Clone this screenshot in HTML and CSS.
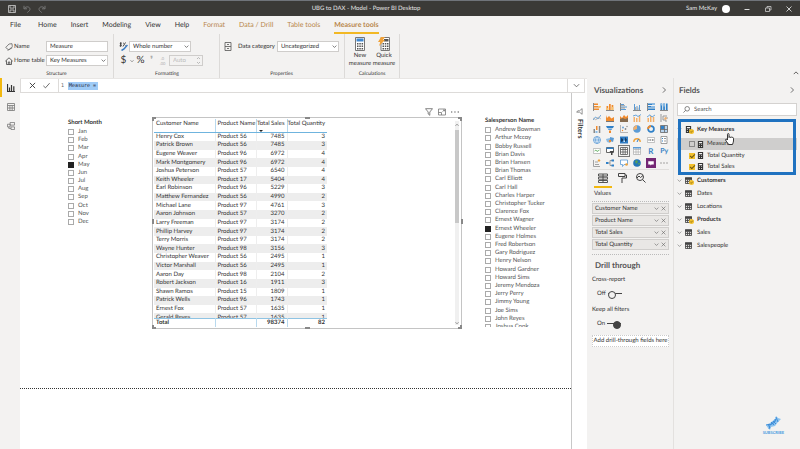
FILE: index.html
```html
<!DOCTYPE html>
<html lang="en">
<head>
<meta charset="utf-8">
<title>UBG to DAX - Model - Power BI Desktop</title>
<link rel="stylesheet" href="styles.css">
</head>
<body>
<svg class="defs" aria-hidden="true">
  <symbol id="chev" viewBox="0 0 8 8"><path d="M1 2.5 4 5.5 7 2.5" fill="none" stroke="currentColor"/></symbol>
  <symbol id="chev-r" viewBox="0 0 8 8"><path d="M2.5 .5 6 4 2.5 7.5" fill="none" stroke="currentColor"/></symbol>
  <symbol id="x" viewBox="0 0 8 8"><path d="M1 1 7 7M7 1 1 7" fill="none" stroke="currentColor"/></symbol>
  <symbol id="tbl" viewBox="0 0 8 8"><path d="M.5 1h7v6.5h-7zM.5 3h7M.5 5.2h7M2.9 3v4.5M5.2 3v4.5" fill="none" stroke="#444"/><path d="M0 .5h8v2H0z" fill="#444"/></symbol>
  <symbol id="calc" viewBox="0 0 8 8"><path d="M1 0h6v8H1z" fill="#333"/><path d="M2.2 1.2h3.6v1.3H2.2zM2.2 3.7h1v1h-1zM4.8 3.7h1v1h-1zM2.2 5.8h1v1h-1zM4.8 5.8h1v1h-1z" fill="#f3f2f1"/></symbol>
  <symbol id="badge" viewBox="0 0 6 6"><circle cx="3" cy="3" r="3" fill="#f2c02c"/><path d="M1.5 3 2.6 4.1 4.5 2" fill="none" stroke="#6b5510" stroke-width=".8"/></symbol>
</svg>
<div class="app">
  <header class="titlebar">
    <div class="quick">
      <button aria-label="Save"><svg viewBox="0 0 8 8"><path d="M.5.5h7v7h-7zM2 .5v2.6h4V.5M2 7.5V5h4v2.5" fill="none" stroke="#ccc" stroke-width=".8"/></svg></button>
      <button aria-label="Undo"><svg viewBox="0 0 8 8"><path d="M1 .8v3h3M1.2 3.6C3 .8 7 1.600 7 4.300 7 5.600 5.500 6.500 4.300 7.500" fill="none" stroke="#777"/></svg></button>
      <button aria-label="Redo"><svg viewBox="0 0 8 8"><path d="M7 .8v3H4M6.800 3.600C5 .8 1 1.600 1 4.300 1 5.600 2.500 6.500 3.700 7.500" fill="none" stroke="#777"/></svg></button>
    </div>
    <h1>UBG to DAX - Model - Power BI Desktop</h1>
    <div class="account"><span>Sam McKay</span><i class="avatar"></i>
      <button aria-label="Minimize"><svg viewBox="0 0 8 8"><path d="M1.500 4.500h5" stroke="#ddd"/></svg></button>
      <button aria-label="Restore"><svg viewBox="0 0 8 8"><path d="M1.500 3h4v3.500h-4zM3 3V1.500h4V5H5.500" fill="none" stroke="#ccc" stroke-width=".8"/></svg></button>
      <button aria-label="Close"><svg viewBox="0 0 8 8"><path d="M1.500 1.500l5 5M6.500 1.500l-5 5" stroke="#ddd" stroke-width=".9"/></svg></button>
    </div>
  </header>

  <nav class="tabs">
    <a href="#">File</a><a href="#">Home</a><a href="#">Insert</a><a href="#">Modeling</a><a href="#">View</a><a href="#">Help</a><a href="#" class="ctx">Format</a><a href="#" class="ctx">Data / Drill</a><a href="#" class="ctx">Table tools</a><a href="#" class="ctx on">Measure tools</a>
  </nav>

  <section class="ribbon">
    <div class="group structure">
      <div class="line"><svg class="ic" viewBox="0 0 8 8"><path d="M.7 4.500 4 1l3-.3L7.300 3.500 3.800 7zM2.500 7.300 7.300 4.800" fill="none" stroke="#666" stroke-width=".8"/></svg><label for="name">Name</label><input id="name" value="Measure"></div>
      <div class="line"><svg class="ic" viewBox="0 0 8 8"><path d="M.3 4.200 4 .8l3.700 3.400M1.500 3.500v4h5v-4M3.300 7.500V5h1.500v2.500" fill="none" stroke="#444" stroke-width=".8"/></svg><label for="home">Home table</label><span class="sel"><select id="home"><option>Key Measures</option></select><svg><use href="#chev"/></svg></span></div>
      <p>Structure</p>
    </div>
    <div class="group formatting">
      <div class="line"><svg class="ic" viewBox="0 0 9 9"><path d="M2.800 1.200C1.300.6.500 1.800 1.700 2.400 3 3 2.500 4.200.6 3.800M1.700.3v4.500M4 4.500 6.500.5M4.200 1.200h.8M6.300 3.800h.9" fill="none" stroke="#333" stroke-width=".9"/><path d="M8.500 3 5 7 2.500 8.500" fill="none" stroke="#3b7dc4" stroke-width="1.500"/></svg><span class="sel"><select aria-label="Format"><option>Whole number</option></select><svg><use href="#chev"/></svg></span></div>
      <div class="line marks"><button>$</button><svg class="dn"><use href="#chev"/></svg><button>%</button><button class="off">❜</button><button class="off dec"><span>.0</span><span>.00</span></button><span class="sel auto"><input aria-label="Decimal places" placeholder="Auto"><svg viewBox="0 0 5 9"><path d="M1 3 2.500 1.500 4 3M1 6l1.500 1.500L4 6" fill="none" stroke="#aaa" stroke-width=".8"/></svg></span></div>
      <p>Formatting</p>
    </div>
    <div class="group properties">
      <div class="line"><svg class="ic" viewBox="0 0 8 9"><path d="M1 .5h6v8H1zM1 4.500h6M3 2.500h2M3 6.500h2" fill="none" stroke="#555" stroke-width=".8"/></svg><label for="cat">Data category</label><span class="sel"><select id="cat"><option>Uncategorized</option></select><svg><use href="#chev"/></svg></span></div>
      <p>Properties</p>
    </div>
    <div class="group calcs">
      <div class="bigs">
        <button><svg viewBox="0 0 12 14"><path d="M1.500.5h9v13h-9z" fill="#fff" stroke="#777"/><path d="M2.500 1.500h7v3h-7z" fill="#3f87cf"/><path d="M3 6h1.500v1.500H3zM5.300 6h1.500v1.500H5.300zM7.600 6h1.500v1.500H7.600zM3 8.500h1.500V10H3zM5.300 8.500h1.500V10H5.300zM7.600 8.500h1.500V10H7.600zM3 11h1.500v1.500H3zM5.300 11h1.500v1.500H5.300zM7.600 11h1.500v1.500H7.600z" fill="#555"/></svg>New<br>measure</button>
        <button><svg viewBox="0 0 12 14"><path d="M3 .5h8.500v13H3z" fill="#fff" stroke="#777"/><path d="M6 2h4.500v2.500H6zM4.500 6H6v1.500H4.500zM6.800 6h1.500v1.500H6.800zM9 6h1.500v1.500H9zM4.500 8.500H6V10H4.500zM6.800 8.500h1.500V10H6.800zM9 8.500h1.500V10H9zM4.500 11H6v1.500H4.500zM6.800 11h1.500v1.500H6.800zM9 11h1.500v1.500H9z" fill="#555"/><path d="M3 0h4L5 3h2L1 9l1.300-4H0z" fill="#f0a23a"/></svg>Quick<br>measure</button>
      </div>
      <p>Calculations</p>
    </div>
    <button class="collapse" aria-label="Collapse ribbon"><svg><use href="#chev"/></svg></button>
  </section>

  <main class="work">
    <nav class="rail">
      <a href="#" class="on" aria-label="Report"><svg viewBox="0 0 8 8"><path d="M.5 0v7.500H8M2.500 7V3.500M4.500 7V1M6.800 7V2.200" fill="none" stroke="#333" stroke-width="1.200"/></svg></a>
      <a href="#" aria-label="Data"><svg viewBox="0 0 8 8"><path d="M.5.5h7v7h-7zM.5 2.500h7M.5 5h7M2.900 2.500v5M5.200 2.500v5" fill="none" stroke="#777" stroke-width=".8"/></svg></a>
      <a href="#" aria-label="Model"><svg viewBox="0 0 9 9"><path d="M3.500.5h5v3h-5zM.5 2.500h3v3h-3zM4.500 5.500h4v3h-4zM2 5.500v1.700h2.500" fill="none" stroke="#777" stroke-width=".9"/></svg></a>
    </nav>

    <section class="report">
      <div class="formula">
        <div class="fx"><button aria-label="Cancel"><svg><use href="#x"/></svg></button><button aria-label="Commit"><svg viewBox="0 0 9 8"><path d="M.5 4.500 3.200 7 8.500 1" fill="none" stroke="#444"/></svg></button></div>
        <div class="code"><span>1</span><mark>Measure =</mark></div>
        <button class="expand" aria-label="Expand"><svg><use href="#chev"/></svg></button>
      </div>
      <div class="stage">
        <div class="canvas">
          <fieldset class="slicer months">
            <legend>Short Month</legend>
            <div class="items">
              <label><input type="checkbox">Jan</label><label><input type="checkbox">Feb</label><label><input type="checkbox">Mar</label><label><input type="checkbox">Apr</label><label><input type="checkbox" checked>May</label><label><input type="checkbox">Jun</label><label><input type="checkbox">Jul</label><label><input type="checkbox">Aug</label><label><input type="checkbox">Sep</label><label><input type="checkbox">Oct</label><label><input type="checkbox">Nov</label><label><input type="checkbox">Dec</label>
            </div>
          </fieldset>

          <div class="visual">
            <div class="tools"><svg viewBox="0 0 8 8"><path d="M.5.7h7L4.800 4v3.300L3.200 6V4z" fill="none" stroke="#666" stroke-width=".8"/></svg><svg viewBox="0 0 8 8"><path d="M.5 1h7v6h-7zM.5 4.500h3V7M4.500 3.500 6.500 2M5 2h1.500v1.300" fill="none" stroke="#777" stroke-width=".8"/></svg><svg viewBox="0 0 8 8"><path d="M0 3.500h1.300v1H0zM3.300 3.500h1.300v1H3.300zM6.600 3.500H8v1H6.600z" fill="#555"/></svg></div>
            <i class="h tl"></i><i class="h tc"></i><i class="h tr"></i><i class="h ml"></i><i class="h mr"></i><i class="h bl"></i><i class="h bc"></i><i class="h br"></i>
            <div class="scroll"><svg class="up"><use href="#chev"/></svg><i></i><svg><use href="#chev"/></svg></div>
            <div class="clip">
            <table>
              <colgroup><col class="c1"><col class="c2"><col class="c3"><col class="c4"></colgroup>
              <thead><tr><th>Customer Name</th><th>Product Name</th><th class="n sorted">Total Sales</th><th class="n">Total Quantity</th></tr></thead>
              <tbody>
                <tr><td>Henry Cox</td><td>Product 56</td><td>7485</td><td>3</td></tr>
                <tr><td>Patrick Brown</td><td>Product 56</td><td>7485</td><td>3</td></tr>
                <tr><td>Eugene Weaver</td><td>Product 96</td><td>6972</td><td>4</td></tr>
                <tr><td>Mark Montgomery</td><td>Product 96</td><td>6972</td><td>4</td></tr>
                <tr><td>Joshua Peterson</td><td>Product 57</td><td>6540</td><td>4</td></tr>
                <tr><td>Keith Wheeler</td><td>Product 17</td><td>5404</td><td>4</td></tr>
                <tr><td>Earl Robinson</td><td>Product 96</td><td>5229</td><td>3</td></tr>
                <tr><td>Matthew Fernandez</td><td>Product 56</td><td>4990</td><td>2</td></tr>
                <tr><td>Michael Lane</td><td>Product 97</td><td>4761</td><td>3</td></tr>
                <tr><td>Aaron Johnson</td><td>Product 57</td><td>3270</td><td>2</td></tr>
                <tr><td>Larry Freeman</td><td>Product 97</td><td>3174</td><td>2</td></tr>
                <tr><td>Phillip Harvey</td><td>Product 97</td><td>3174</td><td>2</td></tr>
                <tr><td>Terry Morris</td><td>Product 97</td><td>3174</td><td>2</td></tr>
                <tr><td>Wayne Hunter</td><td>Product 98</td><td>3156</td><td>3</td></tr>
                <tr><td>Christopher Weaver</td><td>Product 56</td><td>2495</td><td>1</td></tr>
                <tr><td>Victor Marshall</td><td>Product 56</td><td>2495</td><td>1</td></tr>
                <tr><td>Aaron Day</td><td>Product 98</td><td>2104</td><td>2</td></tr>
                <tr><td>Robert Jackson</td><td>Product 16</td><td>1911</td><td>3</td></tr>
                <tr><td>Shawn Ramos</td><td>Product 15</td><td>1809</td><td>1</td></tr>
                <tr><td>Patrick Wells</td><td>Product 96</td><td>1743</td><td>1</td></tr>
                <tr><td>Ernest Fox</td><td>Product 57</td><td>1635</td><td>1</td></tr>
                <tr><td>Gerald Reyes</td><td>Product 57</td><td>1635</td><td>1</td></tr>
              </tbody>
            </table>
            </div>
            <table class="total">
              <colgroup><col class="c1"><col class="c2"><col class="c3"><col class="c4"></colgroup>
              <tbody><tr><th>Total</th><td></td><td>98374</td><td>82</td></tr></tbody>
            </table>
          </div>

          <fieldset class="slicer people">
            <legend>Salesperson Name</legend>
            <div class="items">
              <label><input type="checkbox">Andrew Bowman</label><label><input type="checkbox">Arthur Mccoy</label><label><input type="checkbox">Bobby Russell</label><label><input type="checkbox">Brian Davis</label><label><input type="checkbox">Brian Hansen</label><label><input type="checkbox">Brian Thomas</label><label><input type="checkbox">Carl Elliott</label><label><input type="checkbox">Carl Hall</label><label><input type="checkbox">Charles Harper</label><label><input type="checkbox">Christopher Tucker</label><label><input type="checkbox">Clarence Fox</label><label><input type="checkbox">Ernest Wagner</label><label><input type="checkbox" checked>Ernest Wheeler</label><label><input type="checkbox">Eugene Holmes</label><label><input type="checkbox">Fred Robertson</label><label><input type="checkbox">Gary Rodriguez</label><label><input type="checkbox">Henry Nelson</label><label><input type="checkbox">Howard Gardner</label><label><input type="checkbox">Howard Sims</label><label><input type="checkbox">Jeremy Mendoza</label><label><input type="checkbox">Jerry Perry</label><label><input type="checkbox">Jimmy Young</label><label><input type="checkbox">Joe Sims</label><label><input type="checkbox">John Reyes</label><label><input type="checkbox">Joshua Cook</label>
            </div>
          </fieldset>
        </div>
        <aside class="filters"><svg viewBox="0 0 8 8"><path d="M7 .7v6.500L4 4.800H.8L2 3.200h2z" fill="none" stroke="#666" stroke-width=".8"/></svg><h2>Filters</h2></aside>
      </div>
    </section>

    <aside class="viz">
      <header><h2>Visualizations</h2><svg><use href="#chev-r"/></svg></header>
      <div class="gallery">
        <svg viewBox="0 0 8 8"><path d="M0 0h1v8H0z" fill="#888"/><path d="M1 .5h4V2H1zM1 3h6v1.500H1zM1 5.500h5V7H1z" fill="#f08a2c"/><path d="M5 3h3v1.500H5z" fill="#f7c46c"/></svg>
        <svg viewBox="0 0 8 8"><path d="M0 7h8v1H0z" fill="#888"/><path d="M.5 3h1.700v4H.5zM3 1h1.700v6H3zM5.600 2h1.700v5H5.600z" fill="#f08a2c"/><path d="M.5 5h1.700v2H.5zM5.600 4h1.700v3H5.600z" fill="#f7c46c"/></svg>
        <svg viewBox="0 0 8 8"><path d="M0 0h1v8H0z" fill="#888"/><path d="M1 1h3v1H1zM1 3.500h6v1H1zM1 6h5v1H1z" fill="#5b9bd5"/><path d="M1 2h4v.8H1zM1 4.600h4v.8H1z" fill="#999"/></svg>
        <svg viewBox="0 0 8 8"><path d="M0 7h8v1H0z" fill="#888"/><path d="M1 1h1v6H1zM3.500 3h1v4h-1zM6 2h1v5H6z" fill="#5b9bd5"/><path d="M2 4h1v3H2zM4.500 4.500h1V7h-1z" fill="#aaa"/></svg>
        <svg viewBox="0 0 8 8"><path d="M0 0h1v8H0z" fill="#888"/><path d="M1 .5h7V2H1zM1 3h7v1.500H1zM1 5.500h7V7H1z" fill="#2f80c8"/><path d="M5 .5h3V2H5zM4 3h4v1.500H4z" fill="#8bbce6"/></svg>
        <svg viewBox="0 0 8 8"><path d="M0 7h8v1H0z" fill="#888"/><path d="M.5.5h1.700V7H.5zM3.200.5h1.700V7H3.200zM5.900.5h1.700V7H5.900z" fill="#2f80c8"/><path d="M.5.5h1.700v2H.5zM3.200.5h1.700v3H3.200z" fill="#8bbce6"/></svg>
        <svg viewBox="0 0 8 8"><path d="M0 6 2.500 3 5 5l3-4" fill="none" stroke="#5b9bd5" stroke-width=".9"/><path d="M0 4l3 2 2-3 3 2" fill="none" stroke="#aaa" stroke-width=".7"/></svg>
        <svg viewBox="0 0 8 8"><path d="M0 1v7h8V3L5.500 4.500 3 2 1 4z" fill="#f08a2c"/><path d="M0 7h8v1H0z" fill="#777"/></svg>
        <svg viewBox="0 0 8 8"><path d="M0 8V2l2 2 2-3 2 2 2-2v7z" fill="#f08a2c"/><path d="M0 8V5l3-1 2 1 3-1v4z" fill="#866c50"/></svg>
        <svg viewBox="0 0 8 8"><path d="M.5 3H2v5H.5zM3 4h1.500v4H3zM5.800 2h1.500v6H5.800z" fill="#f3b06b"/><path d="M0 2 3 1l2 1.500L8 .5" fill="none" stroke="#5b9bd5" stroke-width=".9"/></svg>
        <svg viewBox="0 0 8 8"><path d="M.5 4H2v4H.5zM3 2h1.500v6H3zM5.800 3h1.500v5H5.800z" fill="#f3b06b"/><path d="M0 3 3 .8 5 3l3-2" fill="none" stroke="#5b9bd5" stroke-width=".9"/></svg>
        <svg viewBox="0 0 8 8"><path d="M1 0v8M3 2v4h3v2M3 2h4M5 4h3" fill="none" stroke="#999"/><circle cx="5.500" cy="4.500" r="1.200" fill="#f3b06b"/></svg>
        <svg viewBox="0 0 8 8"><path d="M.5 4H2v4H.5zM5.800 1h1.500v7H5.800z" fill="#888"/><path d="M3 1h1.500v4H3z" fill="#f08a2c"/><path d="M2.500 6h2v2h-2z" fill="#8bbce6"/></svg>
        <svg viewBox="0 0 8 8"><path d="M0 1h8L7 3H1z" fill="#2f80c8"/><path d="M1.500 3.500h5L5.500 5h-3z" fill="#5b9bd5"/><path d="M3 5.500h2V8H3z" fill="#f08a2c"/></svg>
        <svg viewBox="0 0 8 8"><path d="M.5 0v7.500H8" fill="none" stroke="#999" stroke-width=".7"/><circle cx="3" cy="2.500" r=".9" fill="#5b9bd5"/><circle cx="5.500" cy="4" r=".9" fill="#888"/><circle cx="2.500" cy="5.500" r=".7" fill="#f08a2c"/><circle cx="7" cy="1.500" r=".7" fill="#888"/></svg>
        <svg viewBox="0 0 8 8"><circle cx="4" cy="4" r="3.700" fill="#5b9bd5"/><path d="M4 4V.3a3.700 3.700 0 0 0-3.500 5z" fill="#f3b06b"/></svg>
        <svg viewBox="0 0 8 8"><circle cx="4" cy="4" r="2.900" fill="none" stroke="#2f80c8" stroke-width="1.700"/><path d="M4 1.100A2.900 2.900 0 0 0 1.100 4" fill="none" stroke="#f08a2c" stroke-width="1.700"/></svg>
        <svg viewBox="0 0 8 8"><path d="M.5.5h7v7h-7zM4.500.5v7M.5 4.500h7" fill="#b8d4ee" stroke="#666" stroke-width=".8"/><path d="M1 1h3v3H1z" fill="#2f80c8"/></svg>
        <svg viewBox="0 0 8 8"><circle cx="4" cy="4" r="3.500" fill="#e3eef8" stroke="#5b9bd5" stroke-width=".8"/><path d="M.5 4h7M4 .5c-2 2-2 5 0 7 2-2 2-5 0-7" fill="none" stroke="#5b9bd5" stroke-width=".7"/></svg>
        <svg viewBox="0 0 8 8"><path d="M0 3l4-1 1 2-1 3-3-1z" fill="#8bbce6"/><path d="M4 1l4 1-1 4-3-1z" fill="#5b9bd5"/><circle cx="4" cy="5" r="1.200" fill="#f08a2c"/></svg>
        <svg viewBox="0 0 8 8"><path d="M0 .5h8v7H0z" fill="#2f7cc4"/><path d="M1 2l2 1v2L1 6zM5 1l2 3-2 2z" fill="#173a5f"/><path d="M3.500 4.500H5V6H3.500z" fill="#cfe3f5"/></svg>
        <svg viewBox="0 0 8 8"><path d="M.8 6a3.200 3.200 0 0 1 6.400 0" fill="none" stroke="#f0a23a" stroke-width="1.400"/><path d="M4 6 5.500 3" stroke="#2f80c8"/></svg>
        <svg viewBox="0 0 8 8"><path d="M.4 1.500h7.200v5H.4z" fill="#fff" stroke="#aaa" stroke-width=".7"/><path d="M1.500 3h1v2h-1zM3.200 3h1v2h-1zM5 3h1.500v2H5z" fill="#999"/></svg>
        <svg viewBox="0 0 8 8"><path d="M1 .5h6v7H1z" fill="#fff" stroke="#888" stroke-width=".8"/><path d="M2 2h1v1H2zM2 4.500h1v1H2z" fill="#2f80c8"/><path d="M4 2h2v1H4zM4 4.500h2v1H4z" fill="#999"/></svg>
        <svg viewBox="0 0 8 8"><path d="M.4 1.500h7.200v5H.4z" fill="#fff" stroke="#aaa" stroke-width=".7"/><path d="M1.500 4 3 3l1 1.500L6.500 3" fill="none" stroke="#5a5" stroke-width=".8"/></svg>
        <svg viewBox="0 0 8 8"><path d="M.5.5h7v5h-7z" fill="#fff" stroke="#666"/><path d="M.5.5h7v1.500h-7z" fill="#2f80c8"/><path d="M3.500 4H8L6.500 6v2H5V6z" fill="#444"/></svg>
        <svg class="picked" viewBox="0 0 8 8"><path d="M.5.5h7v7h-7zM.5 2.500h7M.5 5h7M3 .5v7M5.200.5v7" fill="#fff" stroke="#555" stroke-width=".8"/></svg>
        <svg viewBox="0 0 8 8"><path d="M.5.5h7v7h-7zM.5 2.500h7M.5 5h7M3 .5v7M5.200.5v7" fill="#fff" stroke="#aaa" stroke-width=".7"/><path d="M0 0h8v1.500H0z" fill="#5b9bd5"/></svg>
        <b>R</b><b class="py">Py</b>
        <svg viewBox="0 0 8 8"><path d="M.5 1v6.500H7M2 3h3M2 5.500h4" fill="none" stroke="#999" stroke-width=".9"/><path d="M6 0l1.500 1.500L6 3 4.500 1.500z" fill="#f0a23a"/></svg>
        <svg viewBox="0 0 8 8"><path d="M2.500 4H4V1.500h2M4 4v2.500h2" fill="none" stroke="#888" stroke-width=".8"/><path d="M0 3h2.500v2H0zM5.500.5H8v2H5.500zM5.500 5.500H8v2H5.500z" fill="#2f80c8"/></svg>
        <svg viewBox="0 0 8 8"><path d="M.5 1h7v4.500H4L2.500 7.500v-2h-2z" fill="#fff" stroke="#5b9bd5" stroke-width=".8"/><circle cx="6.500" cy="5.500" r="1.300" fill="#f0a23a"/></svg>
        <svg viewBox="0 0 8 8"><circle cx="4" cy="4" r="3.800" fill="#2476b8"/><path d="M2 2l2-1 1 2-2 2zM5 4l2 0-1 2.500z" fill="#57a05a"/></svg>
        <svg class="pa" viewBox="0 0 8 8"><path d="M0 0h8v8H0z" fill="#742774"/><path d="M1.800 2.500h4.400v2.600H4.500L3.500 6V5.100H1.800z" fill="#fff"/></svg>
        <svg viewBox="0 0 8 8"><path d="M.5 4h1M3.500 4h1M6.500 4h1" stroke="#555"/></svg>
      </div>
      <div class="modes">
        <button class="on" aria-label="Fields"><svg viewBox="0 0 10 10"><path d="M.5 1h9v2h-9zM.5 4.200h9v2h-9zM.5 7.500h9v2h-9zM5 1v8" fill="none" stroke="#444" stroke-width=".9"/></svg></button>
        <button aria-label="Format"><svg viewBox="0 0 10 10"><path d="M1.500.5h6.500v3H1.500zM8 2h1.500v3H5v5" fill="none" stroke="#444"/></svg></button>
        <button aria-label="Analytics"><svg viewBox="0 0 10 10"><circle cx="4" cy="4" r="3.500" fill="none" stroke="#444"/><path d="M6.500 6.500 9.500 9.500M1 5l2-2 1.500 1.500L7 2.500" fill="none" stroke="#444"/></svg></button>
      </div>
      <h3>Values</h3>
      <ul class="wells">
        <li>Customer Name<span><svg><use href="#chev"/></svg><svg><use href="#x"/></svg></span></li>
        <li>Product Name<span><svg><use href="#chev"/></svg><svg><use href="#x"/></svg></span></li>
        <li>Total Sales<span><svg><use href="#chev"/></svg><svg><use href="#x"/></svg></span></li>
        <li>Total Quantity<span><svg><use href="#chev"/></svg><svg><use href="#x"/></svg></span></li>
      </ul>
      <h2 class="drill">Drill through</h2>
      <p>Cross-report</p>
      <label class="toggle">Off<input type="checkbox" role="switch"></label>
      <p>Keep all filters</p>
      <label class="toggle">On<input type="checkbox" role="switch" checked></label>
      <div class="drop">Add drill-through fields here</div>
    </aside>

    <aside class="fields">
      <header><h2>Fields</h2><svg><use href="#chev-r"/></svg></header>
      <label class="search"><svg viewBox="0 0 8 8"><circle cx="4.800" cy="3.200" r="2.600" fill="none" stroke="#555" stroke-width=".8"/><path d="M2.900 5.100.5 7.500" stroke="#555" stroke-width=".8"/></svg><input type="search" placeholder="Search" aria-label="Search"></label>
      <div class="key">
        <div class="row"><svg class="chev"><use href="#chev"/></svg><span class="ti"><svg><use href="#calc"/></svg><svg class="bd"><use href="#badge"/></svg></span><b>Key Measures</b></div>
        <label class="leaf hot"><input type="checkbox"><svg><use href="#calc"/></svg>Measure</label>
        <label class="leaf"><input type="checkbox" checked><svg><use href="#calc"/></svg>Total Quantity</label>
        <label class="leaf"><input type="checkbox" checked><svg><use href="#calc"/></svg>Total Sales</label>
        <svg class="hand" viewBox="0 0 9 12"><path d="M2.500 7V1.300C2.500.3 4 .3 4 1.300V4.500c0-1 1.500-.9 1.500 0 .2-.8 1.500-.7 1.500.2.400-.6 1.500-.3 1.500.6V8c0 1.500-.7 2-1 3.500H3.500C3 9.800 1 8.500.6 7c-.2-1 1-1.200 1.900 0z" fill="#fff" stroke="#222" stroke-width=".9"/></svg>
      </div>
      <div class="row"><svg class="chev"><use href="#chev"/></svg><span class="ti"><svg><use href="#tbl"/></svg><svg class="bd"><use href="#badge"/></svg></span><b>Customers</b></div>
      <div class="row"><svg class="chev"><use href="#chev"/></svg><span class="ti"><svg><use href="#tbl"/></svg></span>Dates</div>
      <div class="row"><svg class="chev"><use href="#chev"/></svg><span class="ti"><svg><use href="#tbl"/></svg></span>Locations</div>
      <div class="row"><svg class="chev"><use href="#chev"/></svg><span class="ti"><svg><use href="#tbl"/></svg><svg class="bd"><use href="#badge"/></svg></span><b>Products</b></div>
      <div class="row"><svg class="chev"><use href="#chev"/></svg><span class="ti"><svg><use href="#tbl"/></svg></span>Sales</div>
      <div class="row"><svg class="chev"><use href="#chev"/></svg><span class="ti"><svg><use href="#tbl"/></svg></span>Salespeople</div>
      <div class="brand"><svg viewBox="0 0 16 14"><path d="M1 9 5 7l5-4 1-3 2 2 3 1-3 3-3 4-4 1-1 3-2-2z" fill="#8cc3ef"/><path d="M1 9c2-1 4 0 6-1s4-2 3-5M4 13c1-2 0-3 2-5s4-2 5-5M11 1l2 5M3 8l2 4M6 6l3 3M8 5l3 3" fill="none" stroke="#3a8ad6" stroke-width=".9"/></svg><span>SUBSCRIBE</span></div>
    </aside>
  </main>
</div>
</body>
</html>
```
FILE: styles.css
```css
* { box-sizing: border-box; }
body, h1, h2, h3, p, ul, fieldset, legend { margin: 0; padding: 0; border: 0; }
body {
  font: 6px/8px Lato, "Open Sans", sans-serif;
  text-rendering: geometricPrecision;
  color: #333;
  background: #f3f2f1;
}
button, input, select { font: inherit; color: inherit; margin: 0; padding: 0; border: 0; background: none; border-radius: 0; outline: 0; text-rendering: inherit; }
a { color: inherit; text-decoration: none; }
svg { width: 8px; height: 8px; display: block; flex: none; }
.defs { position: absolute; width: 0; height: 0; }
.app { height: 100vh; display: flex; flex-direction: column; overflow: hidden; }

.titlebar {
  display: grid; grid-template-columns: 1fr auto 1fr; align-items: center;
  height: 16px; background: #3b3a37; border-top: 1px solid #70747a; color: #e6e6e6;
}
.titlebar h1 { font-size: 6px; font-weight: 400; padding-right: 68px; }
.quick { display: flex; gap: 7px; padding-left: 8px; }
.account { display: flex; align-items: center; justify-content: flex-end; gap: 13px; padding-right: 7px; }
.account span { margin-right: -8px; }
.avatar { width: 8px; height: 8px; border-radius: 50%; background: #fff; }

.tabs { display: flex; gap: 14px; height: 18px; padding-left: 10px; font-size: 7px; line-height: 18px; }
.tabs a:first-child { margin-right: 3px; }
.tabs .ctx { color: #b8864a; }
.tabs .on { font-weight: 700; border-bottom: 2px solid #f2b824; }

.ribbon { display: flex; height: 44px; flex: none; }
.group { display: flex; flex-direction: column; gap: 3px; padding: 7px 5px 0; border-right: 1px solid #dcdad8; }
.group p { margin-top: auto; text-align: center; font-size: 5px; line-height: 7px; }
.line { display: flex; align-items: center; height: 11px; white-space: nowrap; }
.ic { margin-right: 1px; }
.line input, .line select { width: 100%; height: 11px; padding: 0 3px; background: #fff; border: 1px solid #cfcdcb; appearance: none; }
.sel { display: grid; align-items: center; width: 62px; }
.sel > * { grid-area: 1 / 1; }
.sel svg { width: 5px; height: 5px; justify-self: end; margin-right: 2px; }
.structure { width: 114px; }
.structure label { width: 32px; }
.structure .line input { width: 62px; }
.formatting { width: 106px; padding-right: 4px; }
.formatting .ic { width: 9px; height: 9px; }
.marks { font-size: 10px; gap: 2px; }
.marks .dn { width: 4px; height: 4px; }
.marks button { width: 9px; line-height: 11px; text-align: center; }
.marks .off { color: #aaa; }
.marks .dec { display: grid; font-size: 4px; line-height: 5px; }
.marks .auto { width: 34px; font-size: 6px; margin-left: auto; margin-right: 12px; }
.marks .auto input { background: #f3f2f1; }
.marks .auto input::placeholder { color: #bbb; }
.marks .auto svg { height: 9px; }
.properties { width: 125px; padding-left: 4px; }
.properties .ic { height: 9px; margin-right: 6px; }
.properties label { width: 39px; }
.calcs { width: 55px; padding: 3px 3px 0; }
.bigs { display: flex; justify-content: space-around; }
.bigs button { display: flex; flex-direction: column; align-items: center; }
.bigs svg { width: 12px; height: 14px; margin-bottom: 1px; }
.collapse { margin: auto 1px 2px auto; }
.collapse svg { width: 6px; height: 6px; transform: rotate(180deg); }

.work { flex: 1; display: flex; min-height: 0; }
.rail { width: 20px; flex: none; }
.rail a { display: grid; place-items: center; height: 19px; border-left: 2px solid transparent; }
.rail .on { border-color: #f2b80f; }

.report { flex: 1; display: flex; flex-direction: column; min-width: 0; background: #fff; border-top: 1px solid #e8e6e4; }
.formula { display: flex; height: 14px; border: 1px solid #dddbd9; border-top: 0; margin-right: 2px; }
.fx { display: flex; align-items: center; justify-content: space-evenly; width: 38px; border-right: 1px solid #dddbd9; }
.fx svg { width: 7px; height: 7px; }
.code { flex: 1; display: flex; align-items: center; gap: 4px; padding-left: 2px; font: 5px/8px "DejaVu Sans Mono", monospace; }
.code span { color: #666; }
.code mark { background: #9fcbf7; color: #223; padding: 0 2px 0 1px; }
.expand { width: 17px; border-left: 1px solid #dddbd9; display: grid; place-items: center; color: #666; }
.expand svg { width: 7px; height: 7px; }
.stage { flex: 1; display: flex; min-height: 0; }
.canvas { flex: 1; position: relative; border-right: 1px solid #c8c8c8; }
.canvas::after { content: ""; position: absolute; left: 0; right: 0; top: 295px; border-top: 1px dotted #333; }
.filters { width: 15px; flex: none; display: flex; flex-direction: column; align-items: center; gap: 4px; padding-top: 15px; }
.filters svg { width: 7px; height: 7px; }
.filters h2 { writing-mode: vertical-rl; font-size: 7px; font-weight: 700; line-height: 10px; }

.slicer { position: absolute; color: #555; }
.slicer legend { font-weight: 700; font-size: 6px; line-height: 8px; color: #333; }
.items { display: flex; flex-direction: column; margin-top: 1px; }
.items label { flex: 1; display: flex; align-items: center; gap: 4px; min-height: 0; }
.items input, .leaf input { appearance: none; width: 6px; height: 6px; border: 1px solid #aaa; background: #fff; flex: none; }
.items input:checked { background: #222; border-color: #222; }
.months { left: 48px; top: 26px; }
.months .items { height: 98px; }
.people { left: 465px; top: 24px; width: 78px; height: 210px; overflow: hidden; border-right: 3px solid transparent; }
.people .items { height: 205px; }
.people::after { content: ""; position: absolute; right: -3px; top: 9px; width: 3px; height: 116px; background: #ddd; }

.visual { position: absolute; left: 132px; top: 24px; width: 310px; height: 212px; border: 1px solid #c4c4c4; padding: 1px 0 0 1px; }
.tools { position: absolute; right: 2px; top: -10px; display: flex; gap: 5px; }
.h { position: absolute; background: #888; width: 5px; height: 2px; }
.tl, .tr, .bl, .br { width: 4px; height: 4px; background: none; border: 0 solid #888; }
.tl { left: -1px; top: -1px; border-width: 2px 0 0 2px; }
.tr { right: -1px; top: -1px; border-width: 2px 2px 0 0; }
.bl { left: -1px; bottom: -1px; border-width: 0 0 2px 2px; }
.br { right: -1px; bottom: -1px; border-width: 0 2px 2px 0; }
.tc { left: 152px; top: -1px; }
.bc { left: 152px; bottom: -1px; }
.ml, .mr { width: 2px; height: 5px; top: 101px; }
.ml { left: -1px; }
.mr { right: -2px; }
.scroll { position: absolute; right: 2px; top: 3px; bottom: 3px; width: 4px; background: #f0f0f0; display: flex; flex-direction: column; gap: 3px; }
.scroll i { height: 93px; background: #c8c8c8; margin-bottom: auto; }
.scroll svg { width: 4px; height: 4px; }
.scroll .up { transform: rotate(180deg); margin-top: 2px; }
.clip { height: 199px; overflow: hidden; }
table { width: 173px; border-collapse: collapse; table-layout: fixed; }
.clip table { height: 203px; }
.c1 { width: 61px; }
.c2 { width: 41px; }
.c3 { width: 31px; }
.c4 { width: 40px; }
thead tr { height: 13px; }
th { font-weight: 400; text-align: left; padding: 0 2px; border-right: 1px solid #b8d9ee; white-space: nowrap; line-height: 8px; }
thead th { border-bottom: 1px solid #6fb4de; padding-bottom: 2px; }
th:last-child, td:last-child { border-right: 0; }
th.n { text-align: right; padding: 0 2px 2px 0; }
.sorted { position: relative; }
.sorted::after { content: ""; position: absolute; left: 2px; bottom: 0; border: 2px solid transparent; border-top-color: #222; border-bottom: 0; }
td { padding: 0 2px; line-height: 8px; white-space: nowrap; border-right: 1px solid #eee; }
td:nth-child(n+3) { text-align: right; }
tbody tr:nth-child(even) { background: #ededed; }
.total { border-top: 1px solid #8fc4e4; font-weight: 700; }
.total th { font-weight: 700; }
.total td { border-color: #b8d9ee; }

.viz { width: 87px; flex: none; padding: 0 4px 0 5px; border-right: 1px solid #e3e1df; }
.viz > header, .fields > header { display: flex; align-items: center; justify-content: space-between; height: 23px; padding: 0 2px; color: #444; }
.viz > header svg, .fields > header svg { width: 6px; height: 6px; }
aside header h2 { font-size: 8px; line-height: 10px; font-weight: 700; color: #555; }
.gallery { display: grid; grid-template-columns: repeat(6, 1fr); place-items: center; height: 68px; margin: 0 -2px; }
.gallery .picked { outline: 1px solid #777; outline-offset: 1px; }
.gallery .pa { width: 10px; height: 10px; }
.gallery b { font-size: 8px; line-height: 8px; color: #3d85c6; font-weight: 700; }
.gallery .py { font-size: 7px; }
.modes { display: flex; gap: 1px; height: 19px; border-top: 1px solid #e0dedc; padding-left: 2px; }
.modes button { width: 18px; display: grid; place-items: center; border-bottom: 2px solid transparent; }
.modes .on { border-color: #f2b80f; }
.modes svg { width: 10px; height: 10px; }
.viz h3 { font-size: 6px; font-weight: 400; line-height: 8px; padding: 2px; margin-bottom: 1px; }
.wells { list-style: none; display: flex; flex-direction: column; gap: 1px; padding: 1px 0 4px; border: 1px dotted #bbb; border-width: 1px 0; }
.wells li { display: flex; justify-content: space-between; align-items: center; height: 11px; border: 1px solid #d0cecc; background: #e9e7e5; padding: 0 2px; }
.wells span { display: flex; gap: 2px; color: #666; }
.wells svg { width: 5px; height: 5px; }
.viz .drill { font-size: 8px; line-height: 10px; font-weight: 700; color: #555; margin: 5px 3px; }
.viz p { line-height: 10px; }
.toggle { display: flex; align-items: center; gap: 2px; padding: 4px 5px 7px; height: 20px; }
.toggle input { appearance: none; width: 14px; height: 6px; background: linear-gradient(#444, #444) center / 100% 1px no-repeat; position: relative; }
.toggle input::after { content: ""; position: absolute; left: 0; top: 0; width: 6px; height: 6px; border: 1px solid #444; border-radius: 50%; background: #f3f2f1; }
.toggle input:checked::after { left: auto; right: 0; background: #444; }
.drop { height: 12px; line-height: 10px; text-align: center; white-space: nowrap; background: #fff; border: 1px dotted #ccc; }

.fields { width: 126px; flex: none; padding: 0 3px; display: flex; flex-direction: column; }
.search { display: flex; align-items: center; gap: 4px; height: 13px; margin: 2px 0 3px; padding: 0 5px; background: #fff; border: 1px solid #d4d2d0; }
.search svg { width: 7px; height: 7px; }
.search input { flex: 1; min-width: 0; appearance: none; }
.search input::placeholder { color: #555; }
.row { display: flex; align-items: center; gap: 3px; height: 13px; flex: none; white-space: nowrap; }
.row b { font-weight: 700; }
.row .chev { width: 5px; height: 5px; color: #777; }
.ti { position: relative; width: 9px; }
.ti svg { width: 7px; height: 7px; }
.ti .bd { position: absolute; left: 4px; top: 3px; width: 5px; height: 5px; }
.key { position: relative; padding: 2px 0 3px; margin-bottom: -1px; }
.key::after { content: ""; position: absolute; left: 1px; right: 1px; top: 0; bottom: 0; border: 3px solid #1f72c0; }
.key .row { height: 17px; }
.leaf { display: flex; align-items: center; gap: 2px; height: 11px; padding-left: 12px; }
.leaf svg { width: 7px; height: 7px; margin-right: 1px; }
.leaf input { border-color: #888; background: transparent; display: grid; place-items: center; }
.leaf input:checked { border-color: #f2c02c; background: #f2c02c; }
.leaf input:checked::after { content: ""; width: 4px; height: 2px; border: solid #6b5510; border-width: 0 0 1px 1px; transform: rotate(-45deg); }
.leaf.hot { height: 12px; background: #cfcecd; }
.key .hand { position: absolute; left: 48px; top: 14px; width: 9px; height: 12px; z-index: 1; }
.brand { margin: auto 13px 14px auto; display: flex; flex-direction: column; align-items: center; font-size: 4px; line-height: 5px; font-weight: 700; color: #4a9be0; }
.brand svg { width: 16px; height: 14px; }
```
